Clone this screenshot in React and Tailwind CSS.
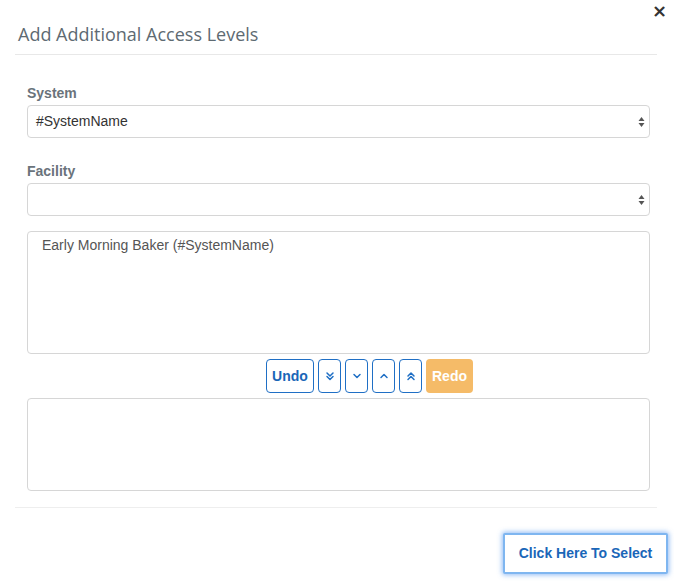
import React from 'react';

function SelectArrows() {
  return (
    <svg width="7" height="12" viewBox="0 0 7 12" className="shrink-0">
      <path d="M3.5 1 L6.5 5 L0.5 5 Z" fill="#555" />
      <path d="M3.5 11 L6.5 7 L0.5 7 Z" fill="#555" />
    </svg>
  );
}

function FakeSelect({ value }) {
  return (
    <div className="h-[33px] border border-[#d6d6d6] rounded-[4px] flex items-center justify-between pl-[8px] pr-[4px] bg-white">
      <span className="text-[14px] text-[#333] font-['Liberation_Sans',Arial,sans-serif]">{value}</span>
      <SelectArrows />
    </div>
  );
}

function Chevron({ dir, double }) {
  const up = dir === 'up';
  const one = up ? 'M2 6 L5 3 L8 6' : 'M2 3 L5 6 L8 3';
  return (
    <svg width="10" height="10" viewBox="0 0 10 10" fill="none" stroke="#1f6fc5" strokeWidth="1.5" strokeLinecap="round" strokeLinejoin="round">
      {double ? (
        <>
          <path d={up ? 'M2 5 L5 2 L8 5' : 'M2 2 L5 5 L8 2'} />
          <path d={up ? 'M2 8.5 L5 5.5 L8 8.5' : 'M2 5.5 L5 8.5 L8 5.5'} />
        </>
      ) : (
        <path d={one} transform="translate(0 0.5)" />
      )}
    </svg>
  );
}

export default function App() {
  const font = "font-['Liberation_Sans',Arial,sans-serif]";
  return (
    <div className="w-[674px] h-[581px] bg-white relative overflow-hidden">
      <button className="absolute right-[7px] top-[2px] text-[#333] text-[18px] font-bold leading-none font-['DejaVu_Sans',sans-serif]">×</button>

      <div className="pl-[18px] pt-[22px] h-[54px] mx-0">
        <h1 className="text-[18px] leading-[24px] text-[#5e6a72] font-['Open_Sans',sans-serif]">Add Additional Access Levels</h1>
      </div>
      <div className="ml-[15px] mr-[17px] border-t border-[#e8e8e8]" />

      <div className={`pl-[27px] pr-[24px] ${font}`}>
        <label className="block mt-[30px] text-[14px] font-bold text-[#6a737b] leading-[16px] mb-[4px]">System</label>
        <FakeSelect value="#SystemName" />

        <label className="block mt-[25px] text-[14px] font-bold text-[#6a737b] leading-[16px] mb-[4px]">Facility</label>
        <FakeSelect value="" />

        <div className="mt-[15px] h-[123px] border border-[#d6d6d6] rounded-[4px] px-[14px] pt-[4px]">
          <div className="text-[14px] text-[#555] leading-[18px]">Early Morning Baker (#SystemName)</div>
        </div>

        <div className="flex justify-center gap-[4px] mt-[5px] h-[34px] pl-[62px]">
          <button className="w-[48px] h-[34px] border border-[#1f6fc5] rounded-[4px] text-[#1a66b8] text-[14px] font-bold">Undo</button>
          <button className="w-[23px] h-[34px] border border-[#1f6fc5] rounded-[4px] flex items-center justify-center"><Chevron dir="down" double /></button>
          <button className="w-[23px] h-[34px] border border-[#1f6fc5] rounded-[4px] flex items-center justify-center"><Chevron dir="down" /></button>
          <button className="w-[23px] h-[34px] border border-[#1f6fc5] rounded-[4px] flex items-center justify-center"><Chevron dir="up" /></button>
          <button className="w-[23px] h-[34px] border border-[#1f6fc5] rounded-[4px] flex items-center justify-center"><Chevron dir="up" double /></button>
          <button className="w-[47px] h-[34px] rounded-[4px] bg-[#f5bb68] text-white text-[14px] font-bold">Redo</button>
        </div>

        <div className="mt-[5px] h-[93px] border border-[#d6d6d6] rounded-[4px]" />
      </div>

      <div className="ml-[15px] mr-[17px] mt-[16px] border-t border-[#eeeeee]" />

      <div className={`flex justify-end pr-[6px] mt-[25px] ${font}`}>
        <button className="w-[165px] h-[41px] border-2 border-[#7fb6f0] shadow-[0_0_5px_1px_rgba(100,160,240,0.7)] rounded-[2px] text-[#1a66b8] text-[14px] font-bold bg-white">Click Here To Select</button>
      </div>
    </div>
  );
}
